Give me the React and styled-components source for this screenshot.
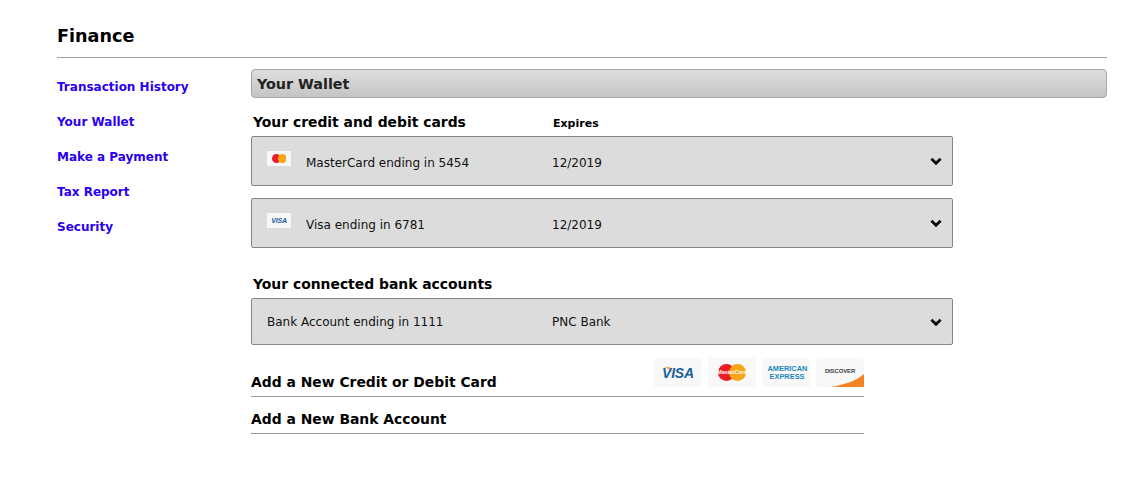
import React from 'react'
import styled, { createGlobalStyle } from 'styled-components'

const GlobalStyle = createGlobalStyle`
  html, body {
    margin: 0;
    padding: 0;
    background: #fff;
    font-family: "DejaVu Sans", Verdana, sans-serif;
    color: #000;
  }
`

const Page = styled.div`
  width: 1140px;
  height: 481px;
  box-sizing: border-box;
  padding: 24px 33px 0 57px;
  overflow: hidden;
`

const Title = styled.h1`
  margin: 0;
  height: 33px;
  font-size: 17.6px;
  line-height: 25px;
  font-weight: 700;
  border-bottom: 1px solid #a3a3a3;
`

const Columns = styled.div`
  display: flex;
  margin-top: 11px;
`

const Sidebar = styled.nav`
  width: 194px;
  flex: none;
  display: flex;
  flex-direction: column;
  gap: 19px;
  padding-top: 10px;
`

const NavLink = styled.a`
  display: block;
  height: 16px;
  font-size: 12px;
  line-height: 16px;
  font-weight: 700;
  color: #2a00f0;
  cursor: pointer;
`

const Main = styled.main`
  flex: 1;
  min-width: 0;
`

const SectionBar = styled.div`
  box-sizing: border-box;
  height: 29px;
  padding: 1px 0 0 5px;
  border: 1px solid #a6a6a6;
  border-radius: 4px;
  background: linear-gradient(#dedede, #c4c4c4);
  font-size: 14.3px;
  line-height: 27px;
  font-weight: 700;
  color: #222;
`

const HeadingRow = styled.div`
  display: flex;
  align-items: baseline;
  height: 20px;
  margin-top: ${p => p.$top}px;
  padding-left: 2px;
  width: 702px;
`

const Heading = styled.h2`
  margin: 0;
  width: 300px;
  flex: none;
  font-size: 13.9px;
  line-height: 20px;
  font-weight: 700;
`

const ExpiresLabel = styled.span`
  font-size: 11px;
  font-weight: 700;
`

const AccountRow = styled.div`
  box-sizing: border-box;
  width: 702px;
  height: ${p => p.$height}px;
  margin-top: ${p => p.$top}px;
  display: flex;
  align-items: center;
  padding: ${p => p.$padTop}px 9px 0 15px;
  border: 1px solid #848484;
  border-radius: 2px;
  background: #dcdcdc;
  font-size: 12px;
  color: #111;
`

const CardThumb = styled.div`
  width: 24px;
  height: 15px;
  flex: none;
  margin: -9px 15px 0 0;
  border-radius: 1px;
  background: #f7f7f7;
  display: flex;
  align-items: center;
  justify-content: center;
`

const AccountName = styled.span`
  width: ${p => p.$width}px;
  flex: none;
  white-space: nowrap;
`

const AccountInfo = styled.span`
  flex: 1;
`

const Chevron = styled.svg`
  width: 12px;
  height: 9px;
  flex: none;
  margin: ${p => p.$top}px 1px 0 0;
`

const AddRow = styled.div`
  box-sizing: border-box;
  width: 613px;
  height: ${p => p.$height}px;
  margin-top: ${p => p.$top}px;
  display: flex;
  align-items: flex-end;
  justify-content: space-between;
  border-bottom: 1px solid #999;
`

const AddTitle = styled.span`
  font-size: 13.9px;
  line-height: 20px;
  padding-bottom: 4px;
  font-weight: 700;
`

const Logos = styled.div`
  display: flex;
  gap: 6px;
  align-self: flex-start;
`

const LogoTile = styled.div`
  position: relative;
  width: 48px;
  height: 29px;
  background: #f8f8f8;
  border-radius: 1px;
  overflow: hidden;
  display: flex;
  align-items: center;
  justify-content: center;
`

const VisaMark = styled.span`
  position: relative;
  font: italic 700 ${p => p.$size}px "Liberation Sans", Arial, sans-serif;
  color: #17609f;
  letter-spacing: -0.2px;
`

const VisaFlick = styled.svg`
  position: absolute;
  left: 10px;
  top: 9px;
`

const AmexMark = styled.span`
  display: block;
  font: 700 7.4px/7.5px "Liberation Sans", Arial, sans-serif;
  color: #1c86be;
  text-align: ${p => p.$align};
  width: 37px;
  white-space: nowrap;
`

const DiscoverMark = styled.span`
  margin-top: -4px;
  font: 700 6px "Liberation Sans", Arial, sans-serif;
  color: #3c4248;
  letter-spacing: -0.15px;
`

const DiscoverSwoosh = styled.svg`
  position: absolute;
  right: 0;
  bottom: 0;
`

function MasterDots({ r, label }) {
  const w = r * 3.3
  return (
    <svg width={w} height={r * 2} viewBox={`0 0 ${w} ${r * 2}`}>
      <circle cx={r} cy={r} r={r} fill="#eb1c26" />
      <circle cx={w - r} cy={r} r={r} fill="#f9a51a" />
      {label && (
        <text x={w / 2} y={r + 2} textAnchor="middle" fontSize="5.4" fontWeight="700" fontFamily="Liberation Sans, sans-serif" fill="#fff">
          {label}
        </text>
      )}
    </svg>
  )
}

function ChevronIcon({ top }) {
  return (
    <Chevron $top={top} viewBox="0 0 12 9">
      <path d="M1.4 1.8 6 6.2 10.6 1.8" fill="none" stroke="#0a0a0a" strokeWidth="2.8" />
    </Chevron>
  )
}

export default function App() {
  return (
    <Page>
      <GlobalStyle />
      <Title>Finance</Title>
      <Columns>
        <Sidebar>
          <NavLink>Transaction History</NavLink>
          <NavLink>Your Wallet</NavLink>
          <NavLink>Make a Payment</NavLink>
          <NavLink>Tax Report</NavLink>
          <NavLink>Security</NavLink>
        </Sidebar>
        <Main>
          <SectionBar>Your Wallet</SectionBar>
          <HeadingRow $top={14}>
            <Heading>Your credit and debit cards</Heading>
            <ExpiresLabel>Expires</ExpiresLabel>
          </HeadingRow>
          <AccountRow $height={50} $top={4} $padTop={4}>
            <CardThumb><MasterDots r={4.5} /></CardThumb>
            <AccountName $width={246}>MasterCard ending in 5454</AccountName>
            <AccountInfo>12/2019</AccountInfo>
            <ChevronIcon top={-4} />
          </AccountRow>
          <AccountRow $height={50} $top={12} $padTop={4}>
            <CardThumb><VisaMark $size={7}>VISA</VisaMark></CardThumb>
            <AccountName $width={246}>Visa ending in 6781</AccountName>
            <AccountInfo>12/2019</AccountInfo>
            <ChevronIcon top={-4} />
          </AccountRow>
          <HeadingRow $top={26}>
            <Heading>Your connected bank accounts</Heading>
          </HeadingRow>
          <AccountRow $height={47} $top={4} $padTop={0}>
            <AccountName $width={285}>Bank Account ending in 1111</AccountName>
            <AccountInfo>PNC Bank</AccountInfo>
            <ChevronIcon top={2} />
          </AccountRow>
          <AddRow $height={39} $top={13}>
            <AddTitle>Add a New Credit or Debit Card</AddTitle>
            <Logos>
              <LogoTile>
                <VisaFlick width="8" height="6" viewBox="0 0 8 6">
                  <path d="M0 0 H6 L8 6 C6 3 3 1 0 0 Z" fill="#f2ae3d" />
                </VisaFlick>
                <VisaMark $size={14}>VISA</VisaMark>
              </LogoTile>
              <LogoTile><MasterDots r={8.5} label="MasterCard" /></LogoTile>
              <LogoTile>
                <div>
                  <AmexMark $align="left">AMERICAN</AmexMark>
                  <AmexMark $align="right">EXPRESS</AmexMark>
                </div>
              </LogoTile>
              <LogoTile>
                <DiscoverMark>DISCOVER</DiscoverMark>
                <DiscoverSwoosh width="34" height="13" viewBox="0 0 34 13">
                  <path d="M0 13 C14 11 26 7 34 0 V13 Z" fill="#f58220" />
                </DiscoverSwoosh>
              </LogoTile>
            </Logos>
          </AddRow>
          <AddRow $height={37} $top={0}>
            <AddTitle>Add a New Bank Account</AddTitle>
          </AddRow>
        </Main>
      </Columns>
    </Page>
  )
}
